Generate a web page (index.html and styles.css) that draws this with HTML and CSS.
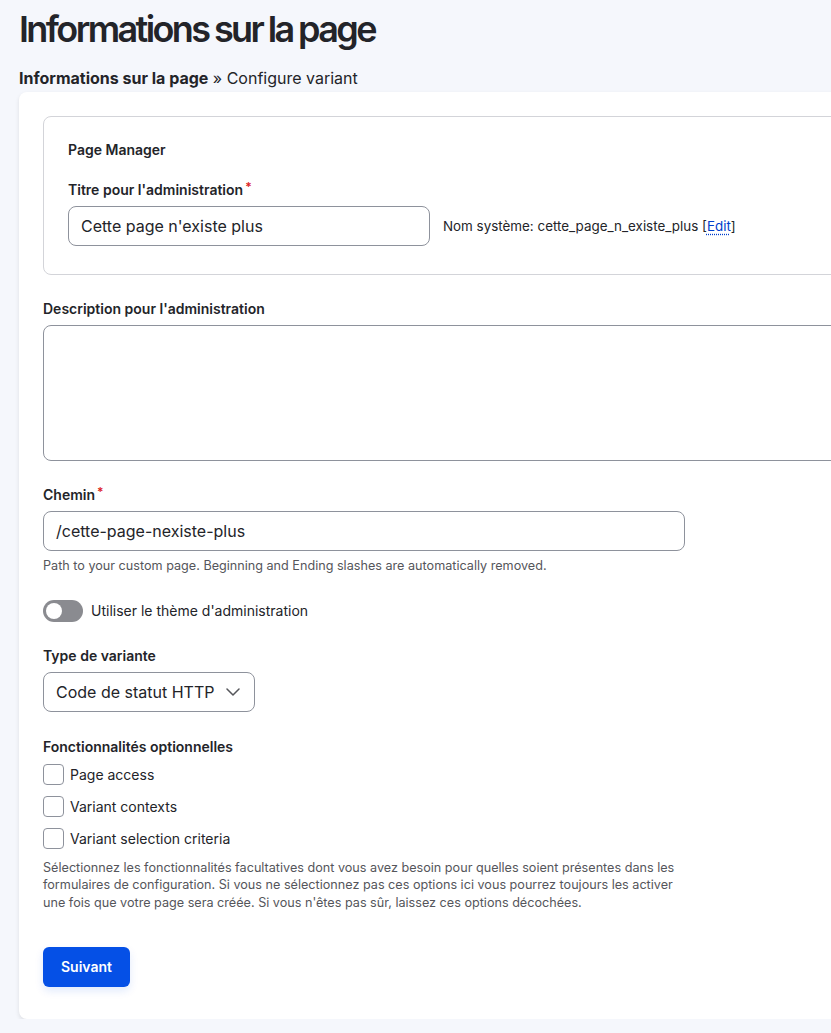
FILE: index.html
```html
<!DOCTYPE html>
<html lang="fr">
<head>
<meta charset="utf-8">
<title>Informations sur la page</title>
<link rel="stylesheet" href="styles.css">
</head>
<body>
<div class="page">
  <h1 class="page-title">Informations sur la page</h1>
  <div class="breadcrumb"><strong>Informations sur la page</strong> » Configure variant</div>
  <form class="card">
    <div class="fieldset">
      <div class="legend">Page Manager</div>
      <div class="label">Titre pour l'administration<span class="req">*</span></div>
      <div class="inline-row">
        <div class="input input-title">Cette page n'existe plus</div>
        <div class="machine">Nom système: cette_page_n_existe_plus [<a class="edit">Edit</a>]</div>
      </div>
    </div>

    <div class="item item-desc">
      <div class="label">Description pour l'administration</div>
      <div class="textarea"></div>
    </div>

    <div class="item item-path">
      <div class="label">Chemin<span class="req">*</span></div>
      <div class="input input-path">/cette-page-nexiste-plus</div>
      <div class="description">Path to your custom page. Beginning and Ending slashes are automatically removed.</div>
    </div>

    <div class="toggle-row">
      <span class="toggle"><span class="knob"></span></span>
      <span class="toggle-label">Utiliser le thème d'administration</span>
    </div>

    <div class="item item-type">
      <div class="label">Type de variante</div>
      <div class="select">Code de statut HTTP
        <svg class="chev" width="14" height="8" viewBox="0 0 14 8"><path d="M1 1l6 6 6-6" fill="none" stroke="#55565b" stroke-width="1.5" stroke-linecap="round" stroke-linejoin="round"/></svg>
      </div>
    </div>

    <div class="item item-opts">
      <div class="label">Fonctionnalités optionnelles</div>
      <div class="checks">
        <div class="check"><span class="box"></span>Page access</div>
        <div class="check"><span class="box"></span>Variant contexts</div>
        <div class="check"><span class="box"></span>Variant selection criteria</div>
      </div>
      <div class="description opts-desc">Sélectionnez les fonctionnalités facultatives dont vous avez besoin pour quelles soient présentes dans les formulaires de configuration. Si vous ne sélectionnez pas ces options ici vous pourrez toujours les activer une fois que votre page sera créée. Si vous n'êtes pas sûr, laissez ces options décochées.</div>
    </div>

    <div class="actions">
      <span class="button">Suivant</span>
    </div>
  </form>
</div>
</body>
</html>
```

FILE: styles.css
```css
html, body {
  margin: 0;
  padding: 0;
  overflow: hidden;
}
body {
  background: #f5f7fc;
  font-family: Inter, "Noto Sans", sans-serif;
  color: #232429;
}
.page {
  padding: 7px 0 0 19px;
  width: 880px;
}
.page-title {
  margin: 0;
  font-size: 36px;
  line-height: 44px;
  font-weight: 600;
  letter-spacing: -2.6px;
  word-spacing: -1px;
  color: #232429;
}
.breadcrumb {
  margin-top: 18px;
  font-size: 16px;
  line-height: 19px;
  color: #232429;
}
.breadcrumb strong {
  font-weight: 700;
}
.card {
  display: block;
  margin-top: 4px;
  background: #fff;
  border-radius: 8px;
  box-shadow: 0 2px 4px rgba(0, 0, 0, 0.1);
  padding: 24px 24px 32px 24px;
}
.fieldset {
  border: 1px solid #d3d4d9;
  border-radius: 8px;
  padding: 24px 24px 28px 24px;
}
.legend {
  font-size: 14px;
  line-height: 18px;
  font-weight: 600;
}
.label {
  font-size: 14px;
  line-height: 17px;
  font-weight: 600;
  margin-bottom: 8px;
}
.fieldset .label {
  margin-top: 22px;
}
.req {
  color: #dc2323;
  font-size: 12px;
  vertical-align: 4px;
  margin-left: 2px;
  line-height: 0;
}
.inline-row {
  display: flex;
  align-items: center;
  gap: 13px;
}
.input {
  box-sizing: border-box;
  height: 40px;
  border: 1px solid #8e929c;
  border-radius: 8px;
  font-size: 16px;
  line-height: 38px;
  padding: 0 12px;
  background: #fff;
}
.input-title {
  width: 362px;
}
.input-path {
  width: 642px;
}
.machine {
  font-size: 13.4px;
  color: #232429;
}
.edit {
  color: #003ecc;
  text-decoration: underline dotted;
  text-underline-offset: 3px;
}
.item-desc {
  margin-top: 25px;
}
.textarea {
  box-sizing: border-box;
  height: 136px;
  border: 1px solid #8e929c;
  border-radius: 8px;
  background: #fff;
}
.item-path {
  margin-top: 25px;
}
.description {
  font-size: 12.64px;
  line-height: 17.5px;
  color: #55565b;
  margin-top: 6px;
}
.toggle-row {
  display: flex;
  align-items: center;
  gap: 8px;
  margin-top: 25px;
  height: 22px;
}
.toggle {
  position: relative;
  display: inline-block;
  width: 40px;
  height: 22px;
  border-radius: 11px;
  background: #8a8b90;
}
.knob {
  position: absolute;
  left: 3px;
  top: 3px;
  width: 16px;
  height: 16px;
  border-radius: 50%;
  background: #fff;
}
.toggle-label {
  font-size: 14px;
  line-height: 17px;
}
.item-type {
  margin-top: 25px;
}
.select {
  box-sizing: border-box;
  display: inline-flex;
  align-items: center;
  gap: 12px;
  height: 40px;
  border: 1px solid #8e929c;
  border-radius: 8px;
  padding: 0 14px 0 12px;
  font-size: 16px;
}
.item-opts {
  margin-top: 26px;
}
.item-opts .label {
  margin-bottom: 4px;
}
.check {
  display: flex;
  align-items: center;
  gap: 6px;
  height: 32px;
  font-size: 14px;
}
.box {
  box-sizing: border-box;
  width: 21px;
  height: 21px;
  border: 1px solid #8e929c;
  border-radius: 4px;
  background: #fff;
}
.opts-desc {
  margin-top: 4px;
  max-width: 650px;
}
.actions {
  margin-top: 36px;
}
.button {
  display: inline-block;
  box-sizing: border-box;
  height: 40px;
  line-height: 40px;
  padding: 0 18px;
  border-radius: 6px;
  background: #0550e6;
  color: #fff;
  font-size: 14px;
  font-weight: 600;
  box-shadow: 0 4px 8px rgba(5, 80, 230, 0.12);
}
```
